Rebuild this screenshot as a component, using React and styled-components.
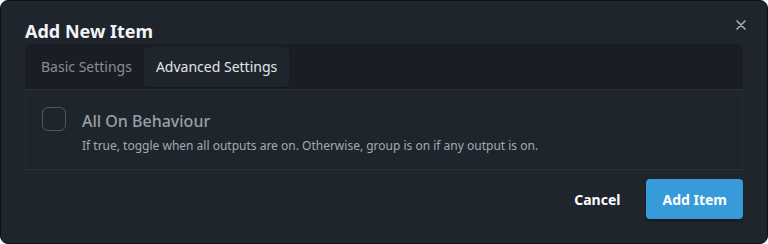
import React, { useState } from "react";
import styled, { createGlobalStyle } from "styled-components";

const GlobalStyle = createGlobalStyle`
  html, body {
    margin: 0;
    padding: 0;
    background: #ffffff;
  }
  body {
    font-family: "Noto Sans", "Open Sans", sans-serif;
  }
`;

const StyledModal = styled.div`
  position: relative;
  box-sizing: border-box;
  width: 768px;
  height: 244px;
  background: #1f252c;
  border: 1px solid #0e1114;
  border-radius: 8px;
  padding: 17px 24px 0 24px;
  color: #e6e8ea;
  display: flex;
  flex-direction: column;
`;

const StyledTitle = styled.h2`
  margin: 0;
  font-size: 18px;
  font-weight: 700;
  line-height: 26px;
  color: #f3f4f5;
`;

const StyledClose = styled.button`
  position: absolute;
  top: 16px;
  right: 18px;
  width: 16px;
  height: 16px;
  padding: 0;
  border: none;
  background: none;
  display: flex;
  align-items: center;
  justify-content: center;
  cursor: pointer;
`;

const StyledTabList = styled.div`
  display: flex;
  align-items: center;
  height: 46px;
  box-sizing: border-box;
  padding: 3px 4px;
  background: #1a1e24;
  border-radius: 6px 6px 0 0;
  border-bottom: 1px solid #2b3139;
`;

const StyledTab = styled.button`
  height: 40px;
  padding: 0 12px;
  border: none;
  border-radius: 4px;
  font-family: inherit;
  font-size: 14px;
  cursor: pointer;
  background: ${(p) => (p.$active ? "#1f252c" : "transparent")};
  color: ${(p) => (p.$active ? "#e2e5e8" : "#868d96")};
  box-shadow: ${(p) => (p.$active ? "0 1px 2px rgba(0,0,0,0.25)" : "none")};
`;

const StyledPanel = styled.div`
  height: 80px;
  box-sizing: border-box;
  border-left: 1px solid #262b32;
  border-bottom: 1px solid #2b3139;
  border-right: 1px solid #262b32;
  display: flex;
  align-items: flex-start;
  gap: 16px;
  padding: 17px 0 0 16px;
`;

const StyledCheckbox = styled.span`
  flex: 0 0 24px;
  width: 24px;
  height: 24px;
  box-sizing: border-box;
  border: 1.5px solid #51575e;
  border-radius: 6px;
`;

const StyledFieldText = styled.div`
  display: flex;
  flex-direction: column;
  padding-top: 2px;
`;

const StyledFieldLabel = styled.div`
  font-size: 16px;
  font-weight: 500;
  line-height: 24px;
  color: #9aa0a7;
`;

const StyledFieldHint = styled.div`
  margin-top: 5px;
  font-size: 12px;
  line-height: 16px;
  color: #a4aab0;
`;

const StyledFooter = styled.div`
  display: flex;
  justify-content: flex-end;
  align-items: center;
  gap: 26px;
  margin-top: 9px;
`;

const StyledButton = styled.button`
  height: 40px;
  padding: 0 ${(p) => (p.$primary ? "16px" : "0")};
  border: none;
  border-radius: 4px;
  font-family: inherit;
  font-size: 14px;
  font-weight: 700;
  color: #ffffff;
  cursor: pointer;
  background: ${(p) => (p.$primary ? "#389bd9" : "transparent")};
  box-shadow: ${(p) => (p.$primary ? "0 2px 3px rgba(0,0,0,0.3)" : "none")};
`;

const App = () => {
  const [tab, setTab] = useState("advanced");
  return (
    <>
      <GlobalStyle />
      <StyledModal>
        <StyledTitle>Add New Item</StyledTitle>
        <StyledClose aria-label="Close">
          <svg width="10" height="10" viewBox="0 0 10 10">
            <path d="M1 1L9 9M9 1L1 9" stroke="#aab0b6" strokeWidth="1.6" strokeLinecap="round" />
          </svg>
        </StyledClose>
        <StyledTabList>
          <StyledTab $active={tab === "basic"} onClick={() => setTab("basic")}>
            Basic Settings
          </StyledTab>
          <StyledTab $active={tab === "advanced"} onClick={() => setTab("advanced")}>
            Advanced Settings
          </StyledTab>
        </StyledTabList>
        <StyledPanel>
          <StyledCheckbox />
          <StyledFieldText>
            <StyledFieldLabel>All On Behaviour</StyledFieldLabel>
            <StyledFieldHint>
              If true, toggle when all outputs are on. Otherwise, group is on if any output is on.
            </StyledFieldHint>
          </StyledFieldText>
        </StyledPanel>
        <StyledFooter>
          <StyledButton>Cancel</StyledButton>
          <StyledButton $primary>Add Item</StyledButton>
        </StyledFooter>
      </StyledModal>
    </>
  );
};

export default App;
